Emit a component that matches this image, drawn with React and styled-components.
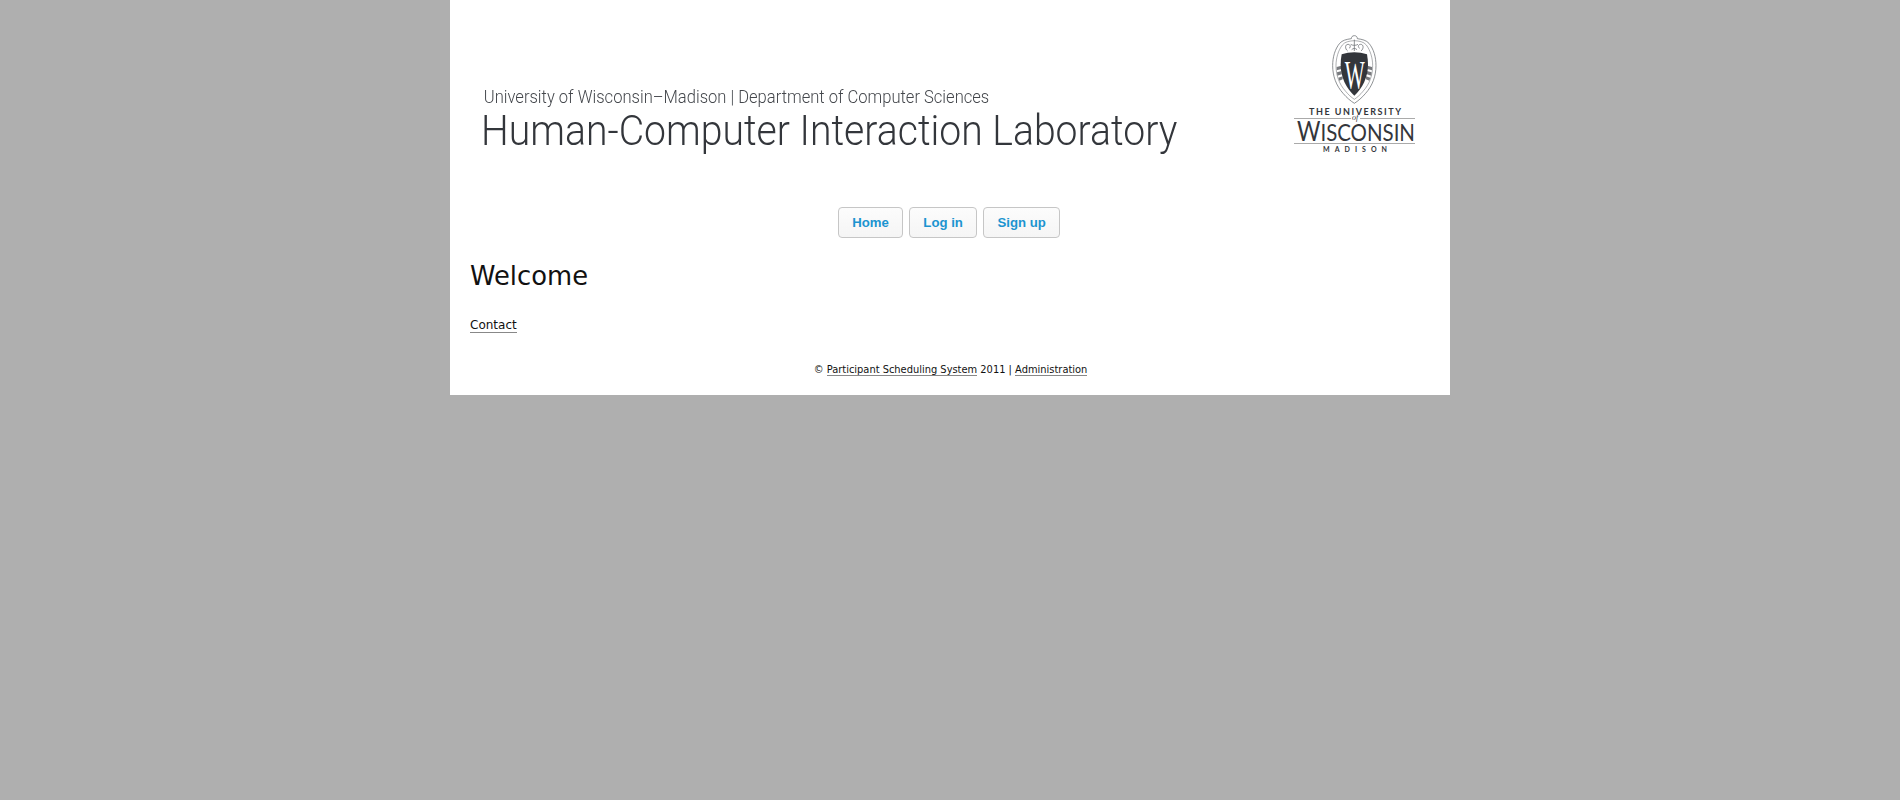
import React from "react";
import styled, { createGlobalStyle } from "styled-components";

const GlobalStyle = createGlobalStyle`
  html, body {
    margin: 0;
    padding: 0;
    min-height: 100%;
    background: #afafaf;
    font-family: "DejaVu Sans", Verdana, sans-serif;
    color: #111;
  }
`;

// crest is drawn at 3x and scaled down into the logo
const Crest = () => (
  <g transform="translate(38 0) scale(0.3333)">
    <g fill="none" stroke="#66696e">
      <path d="M67 2c-6 0-9 4-9 9-15 2-27 5-35 14C9 42 2 66 2 92c0 30 10 60 32 84 10 12 22 22 33 29 11-7 23-17 33-29 22-24 32-54 32-84 0-26-7-50-21-67-8-9-20-12-35-14 0-5-3-9-9-9z" strokeWidth="2.2" />
      <path d="M67 17c-15 1-28 3-36 13C19 46 12 69 12 92c0 28 9 55 29 77 8 10 17 18 26 24 9-6 18-14 26-24 20-22 29-49 29-77 0-23-7-46-19-62-8-10-21-12-36-13z" strokeWidth="1.6" />
      <path d="M47 48c-9-7-8-20 1-20 8 0 9 9 3 12M87 48c9-7 8-20-1-20-8 0-9 9-3 12M67 14v34M56 28c6 4 16 4 22 0M59 44c5-5 11-5 16 0" strokeWidth="2.2" />
    </g>
    <path d="M14 96l14-4v10l-14 4zM15 112l14-4v10l-13 4zM19 128l13-4v9l-10 4zM120 96l-14-4v10l14 4zM119 112l-14-4v10l13 4zM115 128l-13-4v9l10 4z" fill="#77797d" />
    <path d="M29 58c12-4 25-6 38-6s26 2 38 6c2 10 3 21 3 31 0 38-17 70-41 93-24-23-41-55-41-93 0-10 1-21 3-31z" fill="#33363b" />
    <CrestLetter transform="translate(38 160) scale(0.52 1)">W</CrestLetter>
  </g>
);

const UwLogo = () => (
  <LogoSvg viewBox="0 0 121 118" role="img" aria-label="The University of Wisconsin Madison">
    <Crest />
    <LogoSmallText x="15" y="80" textLength="92" lengthAdjust="spacing">THE UNIVERSITY</LogoSmallText>
    <line x1="0" y1="83.500" x2="57" y2="83.500" stroke="#aaa" />
    <line x1="66" y1="83.500" x2="121" y2="83.500" stroke="#aaa" />
    <LogoOf x="58" y="85">of</LogoOf>
    <LogoWordmark transform="translate(3 106) scale(0.87 1)">
      <tspan fontSize="26">W</tspan>ISCONSIN
    </LogoWordmark>
    <line x1="0" y1="108.500" x2="121" y2="108.500" stroke="#aaa" />
    <LogoCityText x="29" y="116.500" textLength="64" lengthAdjust="spacing">MADISON</LogoCityText>
  </LogoSvg>
);

const App = () => {
  return (
    <>
      <GlobalStyle />
      <Page>
        <Banner>
          <BannerText>
            <Department>University of Wisconsin–Madison | Department of Computer Sciences</Department>
            <LabName>Human-Computer Interaction Laboratory</LabName>
          </BannerText>
          <UwLogo />
        </Banner>
        <Nav>
          <NavButton href="#">Home</NavButton>
          <NavButton href="#">Log in</NavButton>
          <NavButton href="#">Sign up</NavButton>
        </Nav>
        <Main>
          <Title>Welcome</Title>
          <Body><TextLink href="#">Contact</TextLink></Body>
        </Main>
        <Footer>
          © <TextLink href="#">Participant Scheduling System</TextLink> 2011 | <TextLink href="#">Administration</TextLink>
        </Footer>
      </Page>
    </>
  );
};

const Page = styled.div`
  box-sizing: border-box;
  width: 1000px;
  height: 395px;
  margin-left: 450px;
  background: #fff;
`;

const Banner = styled.header`
  display: flex;
  justify-content: space-between;
  box-sizing: border-box;
  height: 207px;
  padding: 35px 35px 0 31px;
`;

const BannerText = styled.div`
  padding-top: 50px;
  color: #33363b;
  font-family: "Roboto", sans-serif;
  font-weight: 300;
  will-change: transform;
`;

const Department = styled.div`
  padding-left: 3px;
  font-size: 18px;
  line-height: 24px;
  color: #44474c;
  white-space: nowrap;
  transform: scaleX(0.92);
  transform-origin: left center;
`;

const LabName = styled.div`
  margin-top: -1px;
  font-size: 42px;
  line-height: 46px;
  white-space: nowrap;
  transform: scaleX(0.932);
  transform-origin: left center;
`;

const LogoSvg = styled.svg`
  width: 121px;
  height: 118px;
  flex: none;
`;

const CrestLetter = styled.text`
  font-family: "Liberation Serif", serif;
  font-size: 122px;
  fill: #fff;
`;

const LogoSmallText = styled.text`
  font-family: "Lato", sans-serif;
  font-size: 9px;
  font-weight: 700;
  fill: #33363b;
`;

const LogoOf = styled.text`
  font-family: "Liberation Serif", serif;
  font-size: 8px;
  font-style: italic;
  fill: #33363b;
`;

const LogoWordmark = styled.text`
  font-family: "Lato", sans-serif;
  font-size: 23.500px;
  fill: #33363b;
`;

const LogoCityText = styled.text`
  font-family: "Lato", sans-serif;
  font-size: 7px;
  font-weight: 700;
  fill: #33363b;
`;

const Nav = styled.nav`
  display: flex;
  justify-content: center;
  gap: 6px;
  padding-right: 2px;
`;

const NavButton = styled.a`
  box-sizing: border-box;
  height: 31px;
  padding: 0 13.250px;
  display: flex;
  align-items: center;
  border: 1px solid #c6c6c6;
  border-radius: 4px;
  background: linear-gradient(#fcfcfc, #f5f5f5);
  color: #1c94d0;
  font-family: "Liberation Sans", Arial, sans-serif;
  font-size: 13.200px;
  font-weight: bold;
  text-decoration: none;
`;

const Main = styled.main`
  padding: 0 20px;
`;

const Title = styled.h1`
  margin: 22px 0 0;
  font-size: 25.800px;
  line-height: 32px;
  font-weight: 400;
  color: #111;
`;

const Body = styled.p`
  margin: 25px 0 0;
  font-size: 12px;
  line-height: 16px;
`;

const TextLink = styled.a`
  color: #111;
  text-decoration: none;
  border-bottom: 1px solid #888;
`;

const Footer = styled.footer`
  margin-top: 29.500px;
  padding-left: 1px;
  text-align: center;
  font-size: 9.900px;
  line-height: 14px;
  color: #111;
`;

export default App;
